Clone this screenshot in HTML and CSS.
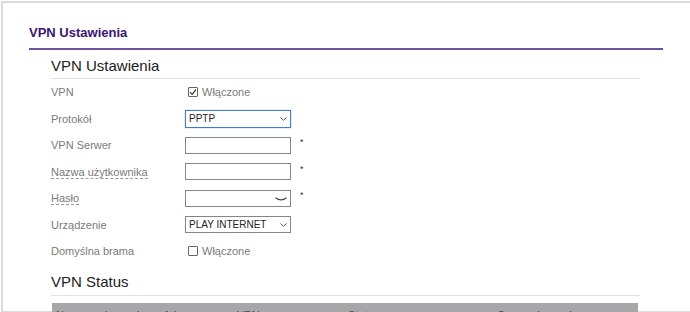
FILE: index.html
```html
<!DOCTYPE html>
<html lang="pl">
<head>
    <meta charset="UTF-8">
    <meta name="viewport" content="width=device-width, initial-scale=1.0">
    <title>VPN Ustawienia</title>
    <link rel="stylesheet" href="styles.css">
</head>
<body>
    <div class="frame">
        <h1 class="page-title">VPN Ustawienia</h1>

        <div class="section">
            <h2 class="section-title">VPN Ustawienia</h2>

            <div class="row">
                <div class="label">VPN</div>
                <div class="field">
                    <label class="check-label">
                        <span class="check">
                            <svg width="8" height="8" viewBox="0 0 8 8"><path d="M1 4.2 L3.1 6.3 L7 1.6" fill="none" stroke="#333" stroke-width="1.2"/></svg>
                        </span>
                        Włączone
                    </label>
                </div>
            </div>

            <div class="row">
                <div class="label">Protokół</div>
                <div class="field">
                    <div class="select focused">
                        <select>
                            <option>PPTP</option>
                            <option>L2TP</option>
                        </select>
                        <svg class="chevron" width="7" height="4" viewBox="0 0 7 4"><path d="M0.5 0.5 L3.5 3.3 L6.5 0.5" fill="none" stroke="#555" stroke-width="1"/></svg>
                    </div>
                </div>
            </div>

            <div class="row">
                <div class="label">VPN Serwer</div>
                <div class="field">
                    <input class="text-input" type="text">
                    <span class="required">*</span>
                </div>
            </div>

            <div class="row">
                <div class="label"><span class="hint">Nazwa użytkownika</span></div>
                <div class="field">
                    <input class="text-input" type="text">
                    <span class="required">*</span>
                </div>
            </div>

            <div class="row">
                <div class="label"><span class="hint">Hasło</span></div>
                <div class="field">
                    <div class="password">
                        <input class="text-input" type="password">
                        <svg class="eye" width="12" height="4" viewBox="0 0 12 4"><path d="M0.5 0.8 Q6 5 11.5 0.8" fill="none" stroke="#444" stroke-width="1.1"/></svg>
                    </div>
                    <span class="required">*</span>
                </div>
            </div>

            <div class="row">
                <div class="label">Urządzenie</div>
                <div class="field">
                    <div class="select">
                        <select>
                            <option>PLAY INTERNET</option>
                        </select>
                        <svg class="chevron" width="7" height="4" viewBox="0 0 7 4"><path d="M0.5 0.5 L3.5 3.3 L6.5 0.5" fill="none" stroke="#555" stroke-width="1"/></svg>
                    </div>
                </div>
            </div>

            <div class="row">
                <div class="label">Domyślna brama</div>
                <div class="field">
                    <label class="check-label">
                        <span class="check"></span>
                        Włączone
                    </label>
                </div>
            </div>

            <h2 class="section-title status-title">VPN Status</h2>

            <div class="table-head">
                <span class="col col-name">Nazwa połączenia</span>
                <span class="col col-server">Adres serwera VPN</span>
                <span class="col col-status">Status</span>
                <span class="col col-time">Czas połączenia</span>
            </div>
        </div>
    </div>
</body>
</html>
```

FILE: styles.css
```css
body {
    margin: 0;
    font-family: "Liberation Sans", Arial, sans-serif;
    background-color: #fff;
}

.frame {
    margin: 1px 0 0 1px;
    height: 311px;
    box-sizing: border-box;
    border-top: 2px solid #dcdcdc;
    border-left: 2px solid #dcdcdc;
    border-bottom: 1px solid #dcdcdc;
    padding: 0 27px 0 26px;
}

.page-title {
    margin: 0;
    padding: 22px 0 7px;
    font-size: 13px;
    line-height: 16px;
    font-weight: bold;
    color: #3a1572;
    border-bottom: 2px solid #6c52a2;
}

.section {
    margin: 0 23px 0 22px;
}

.section-title {
    margin: 0;
    padding: 7px 0 3px;
    font-size: 15px;
    line-height: 18px;
    font-weight: normal;
    color: #222;
    border-bottom: 1px solid #e2e2e2;
}

.status-title {
    padding: 8px 0 4px;
}

.row {
    display: flex;
    align-items: center;
    height: 26.5px;
}

.label {
    width: 134px;
    font-size: 11px;
    color: #7a7a7a;
}

.hint {
    border-bottom: 1px dashed #9a9a9a;
}

.field {
    display: flex;
    align-items: center;
}

.check-label {
    display: flex;
    align-items: center;
    font-size: 11px;
    color: #7a7a7a;
    padding-left: 3px;
}

.check {
    display: flex;
    align-items: center;
    justify-content: center;
    width: 8px;
    height: 8px;
    border: 1px solid #666;
    border-radius: 1px;
    margin-right: 4px;
}

.text-input {
    box-sizing: border-box;
    width: 106px;
    height: 17px;
    margin: 0;
    padding: 0 3px;
    border: 1px solid #858585;
    border-radius: 0;
    font-family: inherit;
    font-size: 10px;
    outline: none;
}

.password {
    position: relative;
    display: flex;
}

.eye {
    position: absolute;
    right: 4px;
    top: 7px;
}

.required {
    margin-left: 9px;
    margin-top: -6px;
    font-size: 9px;
    color: #333;
}

.select {
    position: relative;
    display: flex;
}

.select select {
    appearance: none;
    -webkit-appearance: none;
    box-sizing: border-box;
    width: 106px;
    height: 17px;
    margin: 0;
    padding: 0 3px;
    border: 1px solid #858585;
    border-radius: 0;
    background-color: #fff;
    font-family: inherit;
    font-size: 10px;
    color: #222;
    outline: none;
}

.select.focused select {
    height: 18px;
    border-color: #3f7ad4;
    box-shadow: 0 0 1px #7fa8e8;
}

.chevron {
    position: absolute;
    right: 4px;
    top: 7px;
}

.table-head {
    display: flex;
    margin: 7px 2px 0 1px;
    height: 16px;
    padding-top: 6px;
    background-color: #a7a7a9;
    font-size: 11px;
    color: #4a4a4a;
}

.col {
    white-space: nowrap;
}

.col-name {
    padding-left: 4px;
    width: 107px;
}

.col-server {
    width: 185px;
}

.col-status {
    width: 149px;
}
```
